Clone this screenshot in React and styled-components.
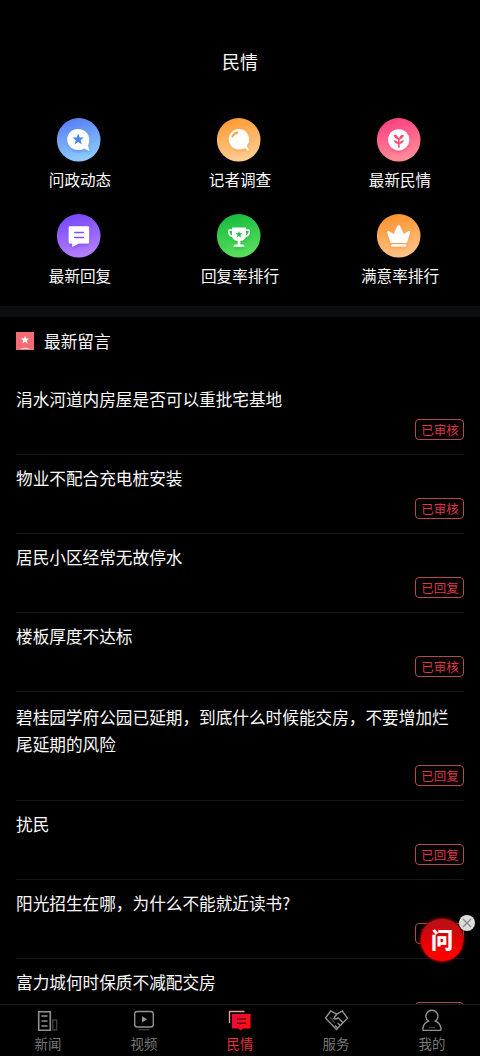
import React from 'react';
import styled, { createGlobalStyle } from 'styled-components';

const GlobalStyle = createGlobalStyle`
  * {
    box-sizing: border-box;
  }

  body {
    margin: 0;
    background: #000;
    color: #fafafa;
    font-family: 'Noto Sans CJK SC', 'Noto Sans', sans-serif;
  }
`;

const Screen = styled.div`
  display: flex;
  flex-direction: column;
  height: 1056px;
  overflow: hidden;
  position: relative;
  width: 480px;
`;

const Header = styled.header`
  flex: none;
  font-size: 18px;
  height: 118px;
  line-height: 26px;
  padding-top: 48px;
  text-align: center;
`;

const Menu = styled.nav`
  display: grid;
  flex: none;
  grid-template-columns: repeat(3, 1fr);
  grid-template-rows: 96px 92px;
`;

const MenuItem = styled.div`
  align-items: center;
  display: flex;
  flex-direction: column;
  font-size: 15.6px;
  line-height: 24px;

  svg {
    display: block;
    height: 44px;
    margin: 0 3px 5px 0;
    width: 44px;
  }
`;

const Divider = styled.div`
  background: #0c0f10;
  flex: none;
  height: 11px;
`;

const SectionTitle = styled.h2`
  align-items: center;
  display: flex;
  flex: none;
  font-size: 16.65px;
  font-weight: inherit;
  gap: 10px;
  height: 59px;
  line-height: 24px;
  margin: 0;
  padding: 0 16px 11px;

  svg {
    height: 18px;
    width: 18px;
  }
`;

const List = styled.ul`
  flex: 1;
  list-style: none;
  margin: 0;
  min-height: 0;
  overflow: hidden;
  padding: 0 16px;
`;

const Row = styled.li`
  border-bottom: 1px solid #161616;
  display: flex;
  flex-direction: column;
  padding: ${({ $tall }) => ($tall ? '12px 0 14px' : '10px 0 14px')};
`;

const RowTitle = styled.div`
  font-size: 16.65px;
  line-height: ${({ $tall }) => ($tall ? '27px' : '26px')};
  margin-bottom: 7px;
`;

const Tag = styled.span`
  align-self: flex-end;
  border: 1px solid #b04c54;
  border-radius: 4px;
  color: #de3545;
  font-size: 12.5px;
  height: 21px;
  line-height: 19px;
  padding-left: 1px;
  text-align: center;
  width: 49px;
`;

const TabBar = styled.footer`
  background: #000;
  border-top: 1px solid #1c1c1c;
  display: flex;
  flex: none;
  height: 52px;
`;

const Tab = styled.div`
  align-items: center;
  color: ${({ $active }) => ($active ? '#e92f3b' : '#777')};
  display: flex;
  flex: 1;
  flex-direction: column;
  font-size: 13.4px;
  line-height: 20px;
  padding-top: 4px;

  svg {
    display: block;
    height: 24px;
    width: 28px;
  }
`;

const AskButton = styled.div`
  background: linear-gradient(#b51218, #d90408 45%, #ff0000 85%);
  border: 1px solid #940609;
  border-radius: 50%;
  box-shadow: 0 0 3px #a00000;
  color: #fff;
  font-size: 22px;
  font-weight: 900;
  height: 44px;
  left: 420px;
  line-height: 39px;
  position: absolute;
  text-align: center;
  top: 918px;
  width: 44px;
`;

const CloseButton = styled.div`
  background: #ddd;
  border-radius: 50%;
  height: 16px;
  left: 459px;
  position: absolute;
  top: 915px;
  width: 16px;

  svg {
    display: block;
    height: 16px;
    width: 16px;
  }
`;

const Disc = ({ id, from, to, children }) => (
  <svg viewBox="0 0 44 44">
    <defs>
      <linearGradient id={id} x1="0" y1="0" x2=".25" y2="1">
        <stop stopColor={from} />
        <stop offset="1" stopColor={to} />
      </linearGradient>
      <filter id={`${id}-shadow`} x="-30%" y="-30%" width="160%" height="170%">
        <feDropShadow dx="0" dy="2" stdDeviation="1.5" floodColor={from} floodOpacity=".6" />
      </filter>
    </defs>
    <circle cx="21.7" cy="21.8" r="21.8" fill={`url(#${id})`} />
    <g fill="#fff" filter={`url(#${id}-shadow)`}>{children}</g>
  </svg>
);

const STAR = 'M0-6 1.5-2H5.7L2.4.7 3.6 5 0 2.4-3.6 5-2.4.7-5.7-2H-1.5Z';

const menu = [
  {
    label: '问政动态',
    from: '#5278f5',
    to: '#8dc9fb',
    icon: (
      <>
        <path d="M21 11C14.800 11 10.200 15.800 10.200 21.600s4.800 10.400 10.800 10.400c2.300 0 4.300-.6 6-1.600l4.600 2.300c.5.200.8-.2.600-.7l-1.200-4.500c.8-1.700 1.200-3.700 1.200-6C32.200 15.500 27.200 11 21 11Z" />
        <path fill="#4d88e6" transform="translate(21.200 21.600)" d={STAR} />
      </>
    ),
  },
  {
    label: '记者调查',
    from: '#ff962b',
    to: '#ffcb91',
    icon: (
      <>
        <path d="M22 11a10.300 10.300 0 1 0 4.500 19.600h2.500l1.300 1.800c.8.700 1.800-.2 1.400-1.200l-2-3.300A10.300 10.300 0 0 0 22 11Z" />
        <path fill="none" stroke="#ff9d3d" strokeWidth="1.800" strokeLinecap="round" d="M15.500 18.500c1-2.200 2.700-3.500 5-4" />
      </>
    ),
  },
  {
    label: '最新民情',
    from: '#fb397f',
    to: '#ff8b98',
    icon: (
      <>
        <circle cx="21.700" cy="21.800" r="10.600" />
        <g fill="#f44d72">
          <path d="M21 20h1.600v9.800H21z" />
          <path d="M21.800 21.700c-2.800-.5-4.600-2.200-5.200-4.400.9-.9 2.300-.8 3.300.2 1 .9 1.700 2.300 1.900 4.200ZM21.800 21.700c2.800-.5 4.600-2.200 5.200-4.400-.9-.9-2.300-.8-3.300.2-1 .9-1.700 2.300-1.900 4.200ZM21.800 26.200c-2.700-.2-4.600-1.600-5.200-3.900 2.700.1 4.600 1.400 5.200 3.900ZM21.800 26.200c2.700-.2 4.600-1.600 5.200-3.900-2.700.1-4.600 1.400-5.200 3.900Z" />
        </g>
      </>
    ),
  },
  {
    label: '最新回复',
    from: '#7142fc',
    to: '#b27dfb',
    icon: (
      <>
        <path d="M12.800 12.300h18.200q1.100 0 1.100 1.100v15q0 1.100-1.100 1.100h-9.300l-5.600 3q-.9.500-.9-.5v-2.500h-2.400q-1.100 0-1.100-1.100v-15q0-1.100 1.100-1.100Z" />
        <path stroke="#8050f5" strokeWidth="1.600" strokeLinecap="round" d="M17.800 18.500h8.500M17.800 23.500h8.500" />
      </>
    ),
  },
  {
    label: '回复率排行',
    from: '#12b83c',
    to: '#57dd5c',
    icon: (
      <>
        <path fill="none" stroke="#fff" strokeWidth="1.700" d="M16 16h-3.300q-1 0-1 1.200c0 3.300 1.800 5.300 5.300 5.300M28 16h3.300q1 0 1 1.200c0 3.300-1.800 5.300-5.300 5.300" />
        <path d="M15 13.500h14v7.500c0 3.700-2.600 5.600-5.800 6v3.500h2.400q1.400 0 2 2.300h-11.200q.6-2.300 2-2.300h2.400v-3.500c-3.200-.4-5.800-2.300-5.800-6Z" />
        <path fill="#22be45" transform="translate(22 20.500) scale(.6)" d={STAR} />
      </>
    ),
  },
  {
    label: '满意率排行',
    from: '#fc8e24',
    to: '#ffc184',
    icon: (
      <>
        <path d="M13.500 29 10.400 18.700c-.4-1.800 1-2.200 2-1.300l4.300 2.500 3.500-7.700q1.500-2.500 3 0l3.500 7.700 4.300-2.500c1-.9 2.400-.5 2 1.300L29.900 29Z" />
        <rect x="14.200" y="30.300" width="15" height="2.200" rx=".8" />
      </>
    ),
  },
];

const messages = [
  { title: '涓水河道内房屋是否可以重批宅基地', status: '已审核' },
  { title: '物业不配合充电桩安装', status: '已审核' },
  { title: '居民小区经常无故停水', status: '已回复' },
  { title: '楼板厚度不达标', status: '已审核' },
  {
    title: '碧桂园学府公园已延期，到底什么时候能交房，不要增加烂尾延期的风险',
    status: '已回复',
    tall: true,
  },
  { title: '扰民', status: '已回复' },
  { title: '阳光招生在哪，为什么不能就近读书?', status: '已回复' },
  { title: '富力城何时保质不减配交房', status: '已回复' },
];

const tabs = [
  {
    label: '新闻',
    icon: (
      <>
        <path strokeWidth="1.600" d="M4.700 2.700h11.600v18.600H4.700z" />
        <path strokeWidth="1.600" d="M7.500 7h6M7.500 12h6M7.500 17h6" />
        <path stroke="#3c3c3c" d="M18.700 11h4v10h-4z" />
      </>
    ),
  },
  {
    label: '视频',
    icon: (
      <>
        <rect x="4.700" y="2.500" width="18.600" height="15.500" rx="2.500" />
        <path fill="#999" stroke="none" d="m12 7.200 5 3.100-5 3.100z" />
        <path stroke="#3c3c3c" d="M8.500 20.700h11" />
      </>
    ),
  },
  {
    label: '民情',
    active: true,
    icon: (
      <>
        <defs>
          <linearGradient id="tabActive">
            <stop stopColor="#f0083c" />
            <stop offset="1" stopColor="#ff1010" />
          </linearGradient>
        </defs>
        <path stroke="#f19a94" d="M3.500 14V2.500H18.500" />
        <path fill="url(#tabActive)" stroke="none" d="M6 5h18.500v14.500h-7.500L15 21.500l-2.500-2H6z" />
        <path stroke="#64101a" strokeWidth="1.600" d="M11 10h9M11 14.300h9" />
      </>
    ),
  },
  {
    label: '服务',
    icon: (
      <>
        <path d="m8.700 2-5.200 7L14.500 20.500l11-11.300-5.200-7.200-5.500 3.200Z" />
        <path d="m14.800 5-3 4.500q2 1.500 4.200-.8l4.700 4.800M15.500 14l3 2.500M13 16.500l3 2.700" />
        <path stroke="#444" d="m8 8.500 5 5.500" />
      </>
    ),
  },
  {
    label: '我的',
    icon: (
      <>
        <path d="M10.500 12.200a6 6 0 1 1 6.800 0c3.200 1.300 5.400 3.800 5.700 7.500q.1 1.700-1.500 1.700H6.300q-1.600 0-1.500-1.700c.3-3.700 2.500-6.200 5.700-7.500Z" />
        <path stroke="#444" d="M11 18.500h6" />
      </>
    ),
  },
];

const App = () => {
  return (
    <Screen>
      <GlobalStyle />
      <Header>民情</Header>

      <Menu>
        {menu.map(({ label, from, to, icon }, i) => (
          <MenuItem key={label}>
            <Disc id={`disc${i}`} from={from} to={to}>
              {icon}
            </Disc>
            {label}
          </MenuItem>
        ))}
      </Menu>

      <Divider />

      <SectionTitle>
        <svg viewBox="0 0 18 18">
          <path fill="#f46c73" d="M0 0h18v18H0z" />
          <path fill="#fff" transform="translate(9 8) scale(.72)" d={STAR} />
          <path fill="#fbd0d2" d="M3.500 17.300Q9 13.800 14.500 17.300Z" />
        </svg>
        最新留言
      </SectionTitle>

      <List>
        {messages.map(({ title, status, tall }) => (
          <Row key={title} $tall={tall}>
            <RowTitle $tall={tall}>{title}</RowTitle>
            <Tag>{status}</Tag>
          </Row>
        ))}
      </List>

      <TabBar>
        {tabs.map(({ label, icon, active }) => (
          <Tab key={label} $active={active}>
            <svg viewBox="0 0 28 24" fill="none" stroke="#929292" strokeWidth="1.400">
              {icon}
            </svg>
            {label}
          </Tab>
        ))}
      </TabBar>

      <AskButton>问</AskButton>
      <CloseButton>
        <svg viewBox="0 0 16 16" stroke="#888" strokeWidth="1.300">
          <path d="m4 4 8 8M12 4l-8 8" />
        </svg>
      </CloseButton>
    </Screen>
  );
};

export default App;
